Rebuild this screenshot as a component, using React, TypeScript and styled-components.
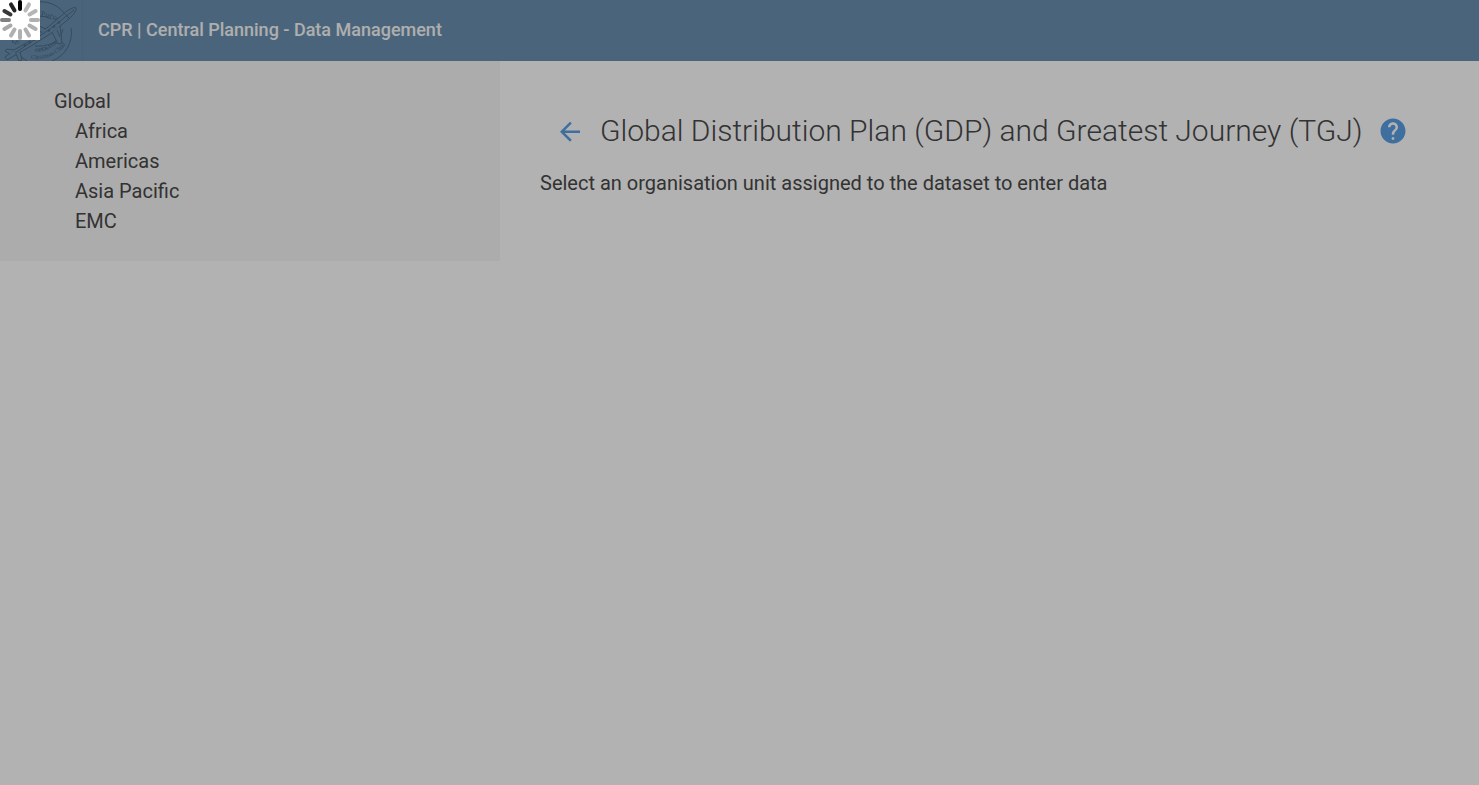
import React from "react";
import styled, { createGlobalStyle } from "styled-components";

const GlobalStyle = createGlobalStyle`
  body {
    margin: 0;
    background: #ffffff;
    color: #494949;
    font-family: Roboto, "Liberation Sans", sans-serif;
    font-size: 20px;
    line-height: 30px;
  }
`;

const Header = styled.header`
  display: flex;
  align-items: flex-start;
  height: 61px;
  background: #6a91b1;
`;

const LogoLink = styled.a`
  display: flex;
  width: 82px;
  height: 61px;
  border-right: 1px solid #648bab;
`;

const AppTitle = styled.span`
  padding: 0 15px;
  color: #fafafa;
  font-size: 18px;
  font-weight: 500;
  line-height: 60px;
`;

const Body = styled.div`
  display: flex;
  align-items: flex-start;
`;

const Sidebar = styled.nav`
  flex: 0 0 500px;
  box-sizing: border-box;
  padding: 25px 54px;
  background: #f7f7f7;
`;

const Tree = styled.ul<{ $nested?: boolean }>`
  margin: 0;
  padding: 0 0 0 ${(p) => (p.$nested ? 21 : 0)}px;
  list-style: none;
`;

const UnitLink = styled.a`
  color: inherit;
  text-decoration: none;
`;

const Main = styled.main`
  flex: 1;
  min-width: 0;
  padding: 40px 40px 0;
`;

const TitleRow = styled.div`
  display: flex;
  align-items: center;
  height: 60px;
`;

const Title = styled.h1`
  margin: 0;
  font-size: 30px;
  font-weight: 300;
  line-height: 40px;
  white-space: nowrap;
`;

const IconButton = styled.button`
  display: flex;
  flex: none;
  align-items: center;
  justify-content: center;
  width: 60px;
  height: 60px;
  padding: 0;
  border: 0;
  background: none;
  color: #5a9fe4;
`;

const Message = styled.p`
  margin: 7px 0 0;
`;

const Shade = styled.div`
  position: fixed;
  inset: 0;
  background: rgba(0, 0, 0, 0.3);
`;

const Spinner = styled.div`
  position: fixed;
  top: 0;
  left: 0;
  display: flex;
  width: 40px;
  height: 40px;
  background: #ffffff;
`;

const spokes = ["#000000", "#b9b9b9", "#b5b5b5", "#b0b0b0", "#b0b0b0", "#b0b0b0", "#b0b0b0", "#b0b0b0", "#a8a8a8", "#808080", "#383838", "#242424"];

const Logo = () => (
  <svg width="82" height="61" viewBox="0 0 82 61" fill="none" stroke="#4f6b84" aria-label="Operation Christmas Child">
    <defs>
      <path id="upper" d="M19 44A22 22 0 0 1 37 17Q53 14 65 30" />
      <path id="middle" d="M35 52Q53 52 65 34" />
      <path id="lower" d="M31 59Q54 61 69 41" />
    </defs>
    <path d="M13 43A30 30 0 0 1 65 14M71 28A30 30 0 0 1 52 61M18 53A30 30 0 0 0 27 61" />
    <path d="M24 39A18 18 0 0 1 51 19M63 29Q60 41 51 44T35 46" />
    <g fill="#48637b" stroke="none" fontFamily="Liberation Serif, serif">
      <text fontSize="8"><textPath href="#upper">Samaritan’s Purse</textPath></text>
      <text fontSize="5" fontWeight="700"><textPath href="#middle">OPERATION</textPath></text>
      <text fontSize="6"><textPath href="#lower">Christmas Child</textPath></text>
    </g>
    <path fill="#6a91b1" d="M5 57L14 50L28 42L48 27L67 11Q75 6 76 8Q77 11 70 18L50 34L31 46L17 54L7 60Z" />
    <path fill="#6a91b1" d="M46 29L29 22L25 24L39 34M52 32L58 44L62 43L60 26M14 50L7 49L5 51L10 54M16 54L19 61L22 60L20 52" />
    <path d="M15 53L50 29L74 10M65 14L69 18M39 30L42 33M57 30L60 37" />
    <path d="M24 46l2-1M29 43l2-1M34 40l2-1M48 31l2-1M53 27l2-1M58 23l2-1" strokeWidth="2" />
  </svg>
);

export default function App() {
  return (
    <>
      <GlobalStyle />
      <Header>
        <LogoLink href="#" aria-label="Home"><Logo /></LogoLink>
        <AppTitle>CPR | Central Planning - Data Management</AppTitle>
      </Header>
      <Body>
        <Sidebar aria-label="Organisation units">
          <Tree>
            <li>
              <UnitLink href="#">Global</UnitLink>
              <Tree $nested>
                {["Africa", "Americas", "Asia Pacific", "EMC"].map((unit) => (
                  <li key={unit}><UnitLink href="#">{unit}</UnitLink></li>
                ))}
              </Tree>
            </li>
          </Tree>
        </Sidebar>
        <Main>
          <TitleRow>
            <IconButton aria-label="Back">
              <svg width="30" height="30" viewBox="0 0 24 24" fill="currentColor">
                <path d="M20 11.5H7.83l5.59-5.59L12 4.5l-8 8 8 8 1.41-1.41L7.83 13.5H20v-2z" />
              </svg>
            </IconButton>
            <Title>Global Distribution Plan (GDP) and Greatest Journey (TGJ)</Title>
            <IconButton aria-label="Help">
              <svg width="30" height="30" viewBox="0 0 24 24" fill="currentColor">
                <path d="M12 2C6.48 2 2 6.48 2 12s4.48 10 10 10 10-4.48 10-10S17.52 2 12 2zm1 17h-2v-2h2v2zm2.07-7.75l-.9.92C13.45 12.9 13 13.5 13 15h-2v-.5c0-1.1.45-2.1 1.17-2.83l1.24-1.26c.37-.36.59-.86.59-1.41 0-1.1-.9-2-2-2s-2 .9-2 2H8c0-2.21 1.79-4 4-4s4 1.79 4 4c0 .88-.36 1.68-.93 2.25z" />
              </svg>
            </IconButton>
          </TitleRow>
          <Message>Select an organisation unit assigned to the dataset to enter data</Message>
        </Main>
      </Body>
      <Shade />
      <Spinner role="status" aria-label="Loading">
        <svg width="40" height="40" viewBox="0 0 40 40" strokeWidth="4" strokeLinecap="round">
          {spokes.map((color, i) => (
            <path key={i} d="M20 2v7" stroke={color} transform={`rotate(${i * 30} 20 20)`} />
          ))}
        </svg>
      </Spinner>
    </>
  );
}
